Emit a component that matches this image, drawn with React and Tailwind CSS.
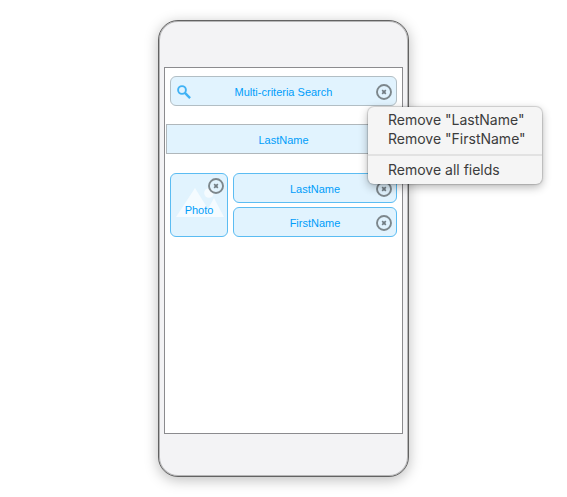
function RemoveIcon() {
  return (
    <svg viewBox="0 0 16 16" className="size-4" fill="none" aria-hidden="true">
      <circle cx="8" cy="8" r="7" stroke="#7d878c" strokeWidth="1.9" />
      <path d="M6.2 6.2l3.6 3.6M9.8 6.2L6.2 9.8" stroke="#727d83" strokeWidth="1.7" />
    </svg>
  );
}

function RemoveButton({ label, className }) {
  return (
    <button type="button" aria-label={label} className={`absolute size-4 ${className}`}>
      <RemoveIcon />
    </button>
  );
}

function Field({ name }) {
  return (
    <div className="relative flex h-[30px] items-center justify-center rounded-md border border-[#5bbcf2] bg-[#e1f3fe] pt-0.5">
      <span>{name}</span>
      <RemoveButton label={`Remove ${name}`} className="top-[7px] right-1" />
    </div>
  );
}

function ContextMenu() {
  return (
    <div
      role="menu"
      className="absolute top-[39px] left-[203px] z-10 w-[174px] rounded-md bg-[#f5f5f5] pt-[3px] pb-[5px] font-['Inter','Liberation_Sans',sans-serif] text-sm leading-[19px] text-[#3c3c3c] shadow-[0_0_1px_1px_rgba(0,0,0,0.15),0_3px_10px_rgba(0,0,0,0.3)]"
    >
      <button type="button" role="menuitem" className="block w-full px-5 text-left whitespace-nowrap">
        Remove "LastName"
      </button>
      <button type="button" role="menuitem" className="block w-full px-5 text-left whitespace-nowrap">
        Remove "FirstName"
      </button>
      <div role="separator" className="mt-1.5 mb-1 h-0.5 bg-[#e2e2e2]" />
      <button type="button" role="menuitem" className="block w-full px-5 text-left whitespace-nowrap">
        Remove all fields
      </button>
    </div>
  );
}

export default function App() {
  return (
    <main className="min-h-screen bg-white pt-5 font-['Liberation_Sans',Arial,sans-serif] text-[11px] leading-4 text-[#009dfa]">
      <div className="mx-auto w-full max-w-[251px] rounded-[20px] border border-[#626262] bg-[#f3f3f5] px-[5px] pt-[46px] pb-[42px] shadow-[inset_0_0_0_1px_rgba(0,0,0,0.25),0_3px_14px_rgba(0,0,0,0.26)]">
        <div className="relative min-h-[367px] border border-[#8b8b8e] bg-white pt-2">
          <div className="relative mx-[5px] flex h-[30px] items-center justify-center rounded-md border border-[#b2bec4] bg-[#e1f3fe] pt-0.5">
            <svg viewBox="0 0 14 14" className="absolute top-2 left-1.5 size-3.5" fill="none" stroke="#3fb2f5" aria-hidden="true">
              <circle cx="5" cy="5" r="3.9" strokeWidth="1.9" />
              <path d="M7.9 7.9l5.2 5.2" strokeWidth="2.4" />
            </svg>
            <span>Multi-criteria Search</span>
            <RemoveButton label="Remove search fields" className="top-[7px] right-1" />
          </div>

          <div className="mx-px mt-[18px] flex h-[30px] items-center justify-center border border-[#b0b7bb] bg-[#e1f3fe] pt-0.5">
            LastName
          </div>

          <div className="mx-[5px] mt-[19px] flex gap-[5px]">
            <div className="relative flex w-[58px] shrink-0 items-center justify-center rounded-md border border-[#5bbcf2] bg-[#e1f3fe] pt-2.5">
              <svg viewBox="0 0 58 64" className="absolute -inset-px h-16 w-[58px]" fill="#f5fbff" aria-hidden="true">
                <path d="M6 44L25 15L38 36L44 25L54 44z" />
                <circle cx="39" cy="20" r="4.8" />
              </svg>
              <span className="relative">Photo</span>
              <RemoveButton label="Remove Photo" className="top-1 right-[3px]" />
            </div>
            <div className="flex flex-1 flex-col gap-1">
              <Field name="LastName" />
              <Field name="FirstName" />
            </div>
          </div>

          <ContextMenu />
        </div>
      </div>
    </main>
  );
}
